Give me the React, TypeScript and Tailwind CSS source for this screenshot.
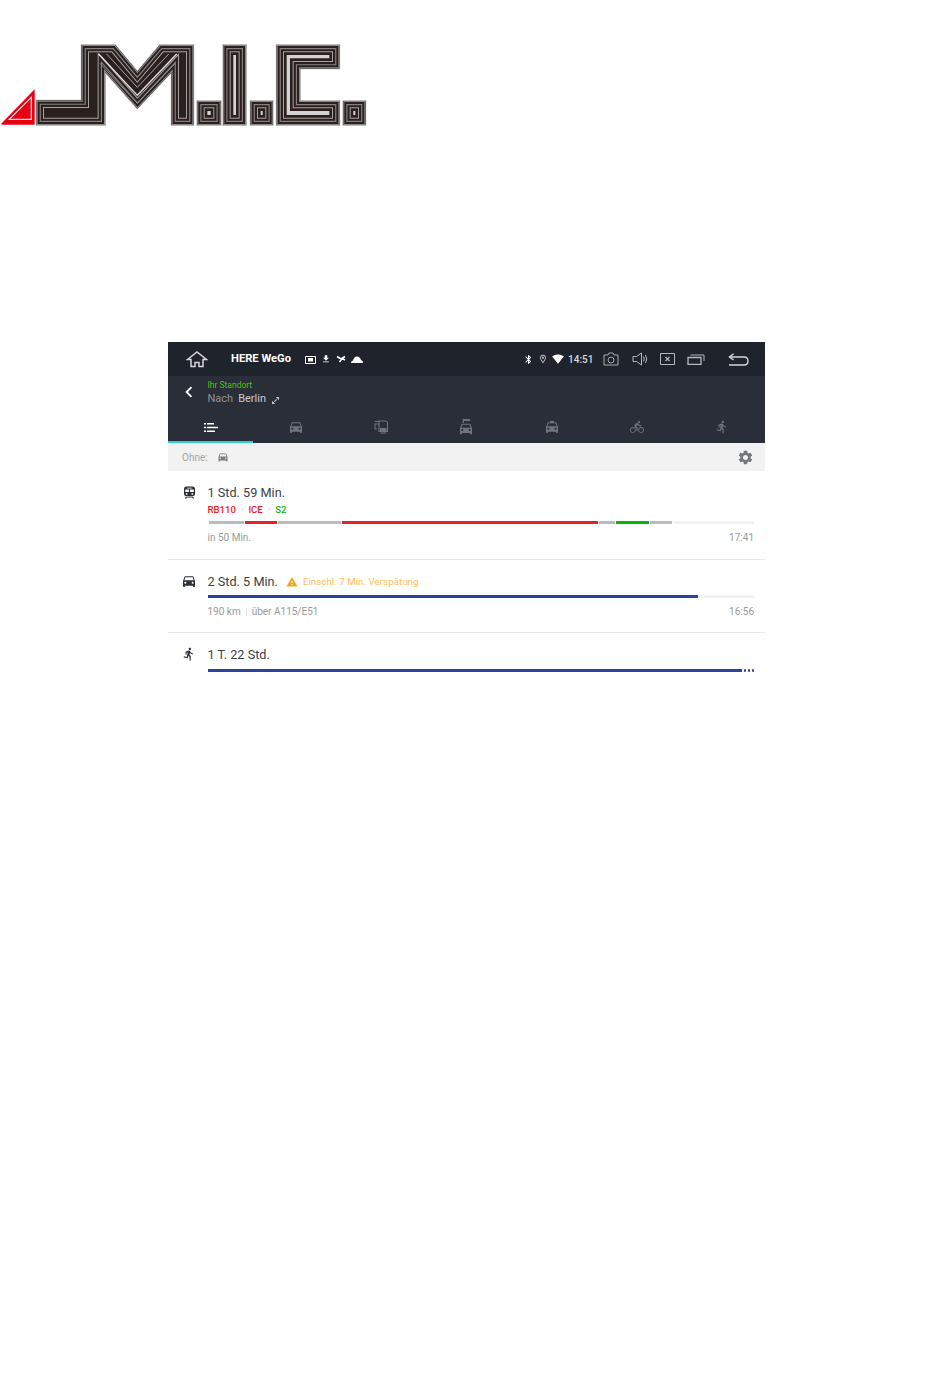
import { ReactNode } from "react";
import {
  MdBluetooth,
  MdChevronLeft,
  MdDirectionsBike,
  MdDirectionsCar,
  MdDirectionsRun,
  MdFileDownload,
  MdLocalTaxi,
  MdOutlineLocationOn,
  MdSettings,
  MdSignalWifi4Bar,
  MdWarning,
} from "react-icons/md";

const LOGO_SHAPES = [
  "M110 212H245V45H345L412 125L480 45H580V285H515V125L412 235L315 125V285H110Z",
  "M592 213H662V285H592Z",
  "M670 45H738V285H670Z",
  "M752 213H818V285H752Z",
  "M830 45H1018V115H900V213H1018V285H830Z",
  "M1030 213H1096V285H1030Z",
];

// concentric bands, widest stroke first so each one shows as a ring inside the clip
const BANDS = [
  { w: 60, c: "#2a211f" },
  { w: 44, c: "#a5a3a2" },
  { w: 38, c: "#2a211f" },
  { w: 25, c: "#85817f" },
  { w: 18, c: "#2a211f" },
  { w: 6, c: "#8d8a88" },
];

const Logo = () => (
  <svg viewBox="0 0 1140 330" className="block h-[110px] w-[380px]">
    <path d="M5 280L104 178V284H5Z" fill="#e60012" />
    <path d="M28 268L94 202V268Z" fill="none" stroke="#f3d6d6" strokeWidth="4" />
    {LOGO_SHAPES.map((d, i) => (
      <g key={d}>
        <clipPath id={`logo-${i}`}>
          <path d={d} />
        </clipPath>
        <path d={d} fill={i === 0 ? "#2a211f" : "#d4d3d2"} stroke="#a8a5a4" strokeWidth="5" />
        <g clipPath={`url(#logo-${i})`} fill="none" strokeLinejoin="miter">
          {BANDS.map((b) => (
            <path key={b.w} d={d} stroke={b.c} strokeWidth={b.w} />
          ))}
          {i === 0 && (
            <>
              <path d="M296 72L412 196L530 72" stroke="#e2e1e0" strokeWidth="4" />
              <path d="M320 72L412 172L506 72" stroke="#a5a3a2" strokeWidth="3" />
              <path d="M300 100L412 220L526 100" stroke="#8d8a88" strokeWidth="3" />
            </>
          )}
        </g>
      </g>
    ))}
  </svg>
);

const HomeIcon = () => (
  <svg viewBox="0 0 22 18" className="h-[18px] w-[22px]" fill="none" stroke="#d5d6d8" strokeWidth="1.5">
    <path d="M1.500 9.500L11 2L20.500 9.500H17V16.500H13V12.500H9V16.500H5V9.500Z" />
  </svg>
);

const CameraIcon = () => (
  <svg viewBox="0 0 16 14" className="h-[14px] w-[16px]" fill="none" stroke="#a9abaf" strokeWidth="1">
    <path d="M1 3H5L6 1H10L11 3H15V13H1Z" />
    <circle cx="8" cy="8" r="3" />
  </svg>
);

const SpeakerIcon = () => (
  <svg viewBox="0 0 17 14" className="h-[14px] w-[17px]" fill="none" stroke="#b5b7ba" strokeWidth="1">
    <path d="M1 4.500H4.500L9.500 1V13L4.500 9.500H1Z" />
    <path d="M11.500 4.500Q13 7 11.500 9.500M13.500 3Q16 7 13.500 11" />
  </svg>
);

const CloseBoxIcon = () => (
  <svg viewBox="0 0 15 12" className="h-[12px] w-[15px]" fill="none" stroke="#b5b7ba" strokeWidth="1">
    <path d="M.5.500H14.500V11.500H.5Z" />
    <path d="M5.500 4L9.500 8M9.500 4L5.500 8" strokeWidth="1.2" />
  </svg>
);

const RecentIcon = () => (
  <svg viewBox="0 0 18 11" className="h-[11px] w-[18px]" fill="none" stroke="#b5b7ba" strokeWidth="1">
    <path d="M1 3.500H14V10.500H1Z" strokeWidth="1.3" />
    <path d="M3.500 1H17V7" />
  </svg>
);

const BackIcon = () => (
  <svg viewBox="0 0 21 13" className="h-[13px] w-[21px]" fill="none" stroke="#d5d6d8" strokeWidth="1.4">
    <path d="M1 4H16Q20 4 20 8Q20 12 16 12H1" />
    <path d="M5.500 .8L1.500 4L5.500 7" />
  </svg>
);

const GalleryIcon = () => (
  <svg viewBox="0 0 11 9" className="h-[9px] w-[11px]" fill="none" stroke="#ffffff">
    <path d="M.5 1.500H10.500V8.500H.5Z" />
    <path d="M3 3H8V6.500H3Z" fill="#ffffff" stroke="none" />
  </svg>
);

const MissedIcon = () => (
  <svg viewBox="0 0 10 8" className="h-[8px] w-[10px]" fill="none" stroke="#ffffff" strokeWidth="1.5">
    <path d="M1 1.500L5 4L9 1.500M3.500 7L6 3.500L9 5" />
  </svg>
);

const CloudIcon = () => (
  <svg viewBox="0 0 12 7" className="h-[7px] w-[12px]" fill="#ffffff">
    <path d="M0 7Q0 4.500 2 4.500Q3 .5 6 .5Q9 .5 10 4Q12 4.500 12 7Z" />
  </svg>
);

const ExpandIcon = () => (
  <svg viewBox="0 0 7 7" className="h-[7px] w-[7px]" fill="#c5c7cc">
    <path d="M3.800 0H7V3.200ZM0 3.800V7H3.200ZM2 4.200L4.200 2L5 2.800L2.800 5Z" />
  </svg>
);

const ListIcon = () => (
  <svg viewBox="0 0 14 9" className="h-[9px] w-[14px]" fill="#ffffff">
    <path d="M0 0H2V1.500H0ZM3 0H10V1.500H3ZM0 3.700H2V5.200H0ZM3 3.700H14V5.200H3ZM0 7.400H2V8.900H0ZM3 7.400H11V8.900H3Z" />
  </svg>
);

const ShipCarIcon = () => (
  <svg viewBox="0 0 24 24" className="h-[16px] w-[16px]" fill="#6f737b">
    <path d="M7 0h2v6H7zM9 0h9v3H9z" />
    <path
      transform="translate(0 2)"
      d="M18.920 6.010C18.720 5.420 18.160 5 17.500 5h-11c-.66 0-1.210.42-1.420 1.010L3 12v8c0 .55.45 1 1 1h1c.55 0 1-.45 1-1v-1h12v1c0 .55.45 1 1 1h1c.55 0 1-.45 1-1v-8l-2.080-5.990zM6.500 16c-.83 0-1.500-.67-1.500-1.500S5.670 13 6.500 13s1.500.67 1.500 1.500S7.330 16 6.500 16zm11 0c-.83 0-1.500-.67-1.500-1.500s.67-1.500 1.500-1.500 1.500.67 1.500 1.500-.67 1.500-1.500 1.500zM5 11l1.500-4.500h11L19 11H5z"
    />
  </svg>
);

const TransitIcon = () => (
  <svg viewBox="0 0 14 14" className="h-[14px] w-[14px]" fill="none" stroke="#6f737b" strokeWidth="1.1">
    <path d="M4 1H11Q13.500 1 13.500 3V11.500H5V4H1V9H3" />
    <path d="M1 1.500H5V4" />
    <path d="M6 8H12.500V11H6Z" fill="#6f737b" stroke="none" />
    <path d="M6.500 13H12" />
  </svg>
);

const TrainIcon = () => (
  <svg viewBox="0 0 12 13" className="h-[13px] w-[11px]" fill="#2b2f38">
    <path
      fillRule="evenodd"
      d="M3 0H9Q12 0 12 3V8.500Q12 10.500 9.500 10.500H2.500Q0 10.500 0 8.500V3Q0 0 3 0ZM3.500 1.200V2.200H8.500V1.200ZM1.300 3.200V6H5.400V3.200ZM6.600 3.200V6H10.700V3.200ZM2 7.300V9H3.800V7.300ZM8.200 7.300V9H10V7.300Z"
    />
    <path d="M2 11H10L11 13H9.500L9 12H3L2.500 13H1Z" />
  </svg>
);

const TABS: ReactNode[] = [
  <ListIcon key="list" />,
  <MdDirectionsCar key="car" className="text-[16px] text-[#6f737b]" />,
  <TransitIcon key="transit" />,
  <ShipCarIcon key="ship" />,
  <MdLocalTaxi key="taxi" className="text-[16px] text-[#6f737b]" />,
  <MdDirectionsBike key="bike" className="text-[14px] text-[#6f737b]" />,
  <MdDirectionsRun key="walk" className="text-[14px] text-[#6f737b]" />,
];

const RowIcon = ({ children }: { children: ReactNode }) => (
  <div className="flex w-[39.500px] shrink-0 justify-center pl-[3px] text-[16px] text-[#2b2f38]">{children}</div>
);

const App = () => {
  return (
    <div className="h-[1389px] w-[950px] overflow-hidden bg-white pt-[30px] font-['Roboto',sans-serif]">
      <Logo />
      <div className="ml-[168px] mt-[202px] w-[597px]">
        {/* system bar */}
        <div className="flex h-[34px] items-center bg-[#1f232c] pl-[18px] text-white">
          <HomeIcon />
          <span className="ml-[23px] mt-[1px] text-[11.200px] font-bold">HERE WeGo</span>
          <div className="ml-[14px] flex items-center">
            <GalleryIcon />
            <MdFileDownload className="ml-[5px] text-[10px]" />
            <div className="ml-[5px]">
              <MissedIcon />
            </div>
            <div className="ml-[5px]">
              <CloudIcon />
            </div>
          </div>
          <div className="ml-[160px] flex items-center">
            <MdBluetooth className="text-[11px]" />
            <MdOutlineLocationOn className="ml-[4px] text-[10px] text-[#c8c9cc]" />
            <MdSignalWifi4Bar className="ml-[4px] text-[12px]" />
            <span className="ml-[4px] text-[10px] font-medium text-[#d9dadc]">14:51</span>
            <div className="ml-[10px]">
              <CameraIcon />
            </div>
            <div className="ml-[13px]">
              <SpeakerIcon />
            </div>
            <div className="ml-[11px]">
              <CloseBoxIcon />
            </div>
            <div className="ml-[12px]">
              <RecentIcon />
            </div>
            <div className="ml-[23px]">
              <BackIcon />
            </div>
          </div>
        </div>

        {/* search header */}
        <div className="bg-[#2a2e39]">
          <div className="flex h-[39px] items-start pt-[4px]">
            <div className="flex w-[39.500px] justify-center pl-[3px] pt-[1px]">
              <MdChevronLeft className="text-[22px] text-white" />
            </div>
            <div className="flex flex-col">
              <span className="text-[8.500px] leading-[10px] text-[#4cc20a]">Ihr Standort</span>
              <div className="mt-[2px] flex items-center text-[11px] leading-[14px]">
                <span className="text-[#8f929a]">Nach</span>
                <span className="ml-[5px] text-[#c9cbd0]">Berlin</span>
                <span className="ml-[6px] mt-[2px]">
                  <ExpandIcon />
                </span>
              </div>
            </div>
          </div>
          <div className="flex h-[28px]">
            {TABS.map((icon, i) => (
              <div
                key={i}
                className={
                  i === 0
                    ? "flex flex-1 items-center justify-center border-b-2 border-[#2bd4cb] pb-[2px]"
                    : "flex flex-1 items-center justify-center border-b-2 border-transparent pb-[2px]"
                }
              >
                {icon}
              </div>
            ))}
          </div>
        </div>

        {/* filter */}
        <div className="flex h-[28px] items-center justify-between bg-[#f2f2f2] pl-[14px] pr-[11px]">
          <div className="flex items-center">
            <span className="mt-[1px] text-[10px] text-[#a5a5a5]">Ohne:</span>
            <MdDirectionsCar className="ml-[9px] text-[12px] text-[#777b82]" />
          </div>
          <MdSettings className="text-[17px] text-[#74777c]" />
        </div>

        {/* train */}
        <div className="flex h-[89px] border-b border-[#e8e8e8] pr-[11px]">
          <RowIcon>
            <div className="mt-[15px]">
              <TrainIcon />
            </div>
          </RowIcon>
          <div className="flex-1 pt-[14px]">
            <div className="text-[12.700px] leading-[15px] text-[#3d4046]">1 Std. 59 Min.</div>
            <div className="mt-[3px] flex h-[14px] items-center text-[9.600px] font-medium">
              <span className="text-[#ee1c25]">RB110</span>
              <span className="mx-[5px] text-[8px] text-[#cfcfcf]">›</span>
              <span className="text-[#ee1c25]">ICE</span>
              <span className="mx-[5px] text-[8px] text-[#cfcfcf]">›</span>
              <span className="text-[#12b312]">S2</span>
            </div>
            <div className="mt-[4px] flex h-[3px] pl-[1px]">
              <div className="w-[35px] bg-[#b9bcbf]" />
              <div className="ml-[1px] w-[32px] bg-[#e8202a]" />
              <div className="ml-[1px] w-[63px] bg-[#b9bcbf]" />
              <div className="ml-[1px] w-[256px] bg-[#e8202a]" />
              <div className="ml-[1px] w-[16px] bg-[#b9bcbf]" />
              <div className="ml-[1px] w-[33px] bg-[#09b509]" />
              <div className="ml-[1px] w-[22px] bg-[#b9bcbf]" />
              <div className="ml-[1px] flex-1 bg-[#f2f2f2]" />
            </div>
            <div className="mt-[8px] flex justify-between text-[10px] leading-[12px] text-[#9a9a9a]">
              <span>in 50 Min.</span>
              <span>17:41</span>
            </div>
          </div>
        </div>

        {/* car */}
        <div className="flex h-[73px] border-b border-[#e8e8e8] pr-[11px]">
          <RowIcon>
            <MdDirectionsCar className="mt-[13px]" />
          </RowIcon>
          <div className="flex-1 pt-[14px]">
            <div className="flex h-[15px] items-center">
              <span className="text-[12.700px] text-[#3d4046]">2 Std. 5 Min.</span>
              <MdWarning className="ml-[8px] text-[12px] text-[#f5a623]" />
              <span className="ml-[5px] mt-[1px] text-[9.800px] text-[#fbbf5e]">Einschl. 7 Min. Verspätung</span>
            </div>
            <div className="mt-[6px] flex h-[3px]">
              <div className="w-[490px] bg-[#2b459c]" />
              <div className="flex-1 bg-[#f2f2f2]" />
            </div>
            <div className="mt-[8px] flex justify-between text-[10px] leading-[12px] text-[#9a9a9a]">
              <div className="flex items-center">
                <span>190 km</span>
                <span className="mx-[5px] h-[8px] w-px bg-[#e4e4e4]" />
                <span>über A115/E51</span>
              </div>
              <span>16:56</span>
            </div>
          </div>
        </div>

        {/* walk */}
        <div className="flex h-[46px] pr-[11px]">
          <RowIcon>
            <MdDirectionsRun className="mt-[14px] text-[14px]" />
          </RowIcon>
          <div className="flex-1 pt-[14px]">
            <div className="text-[12.700px] leading-[15px] text-[#3d4046]">1 T. 22 Std.</div>
            <div className="mt-[7px] flex h-[3px] items-center">
              <div className="h-[3px] flex-1 bg-[#2b459c]" />
              <div className="ml-[2px] h-[3px] w-[2.500px] rounded-full bg-[#2b459c]" />
              <div className="ml-[1.500px] h-[3px] w-[2.500px] rounded-full bg-[#2b459c]" />
              <div className="ml-[1.500px] h-[3px] w-[2.500px] rounded-full bg-[#2b459c]" />
            </div>
          </div>
        </div>
      </div>
    </div>
  );
};

export default App;
